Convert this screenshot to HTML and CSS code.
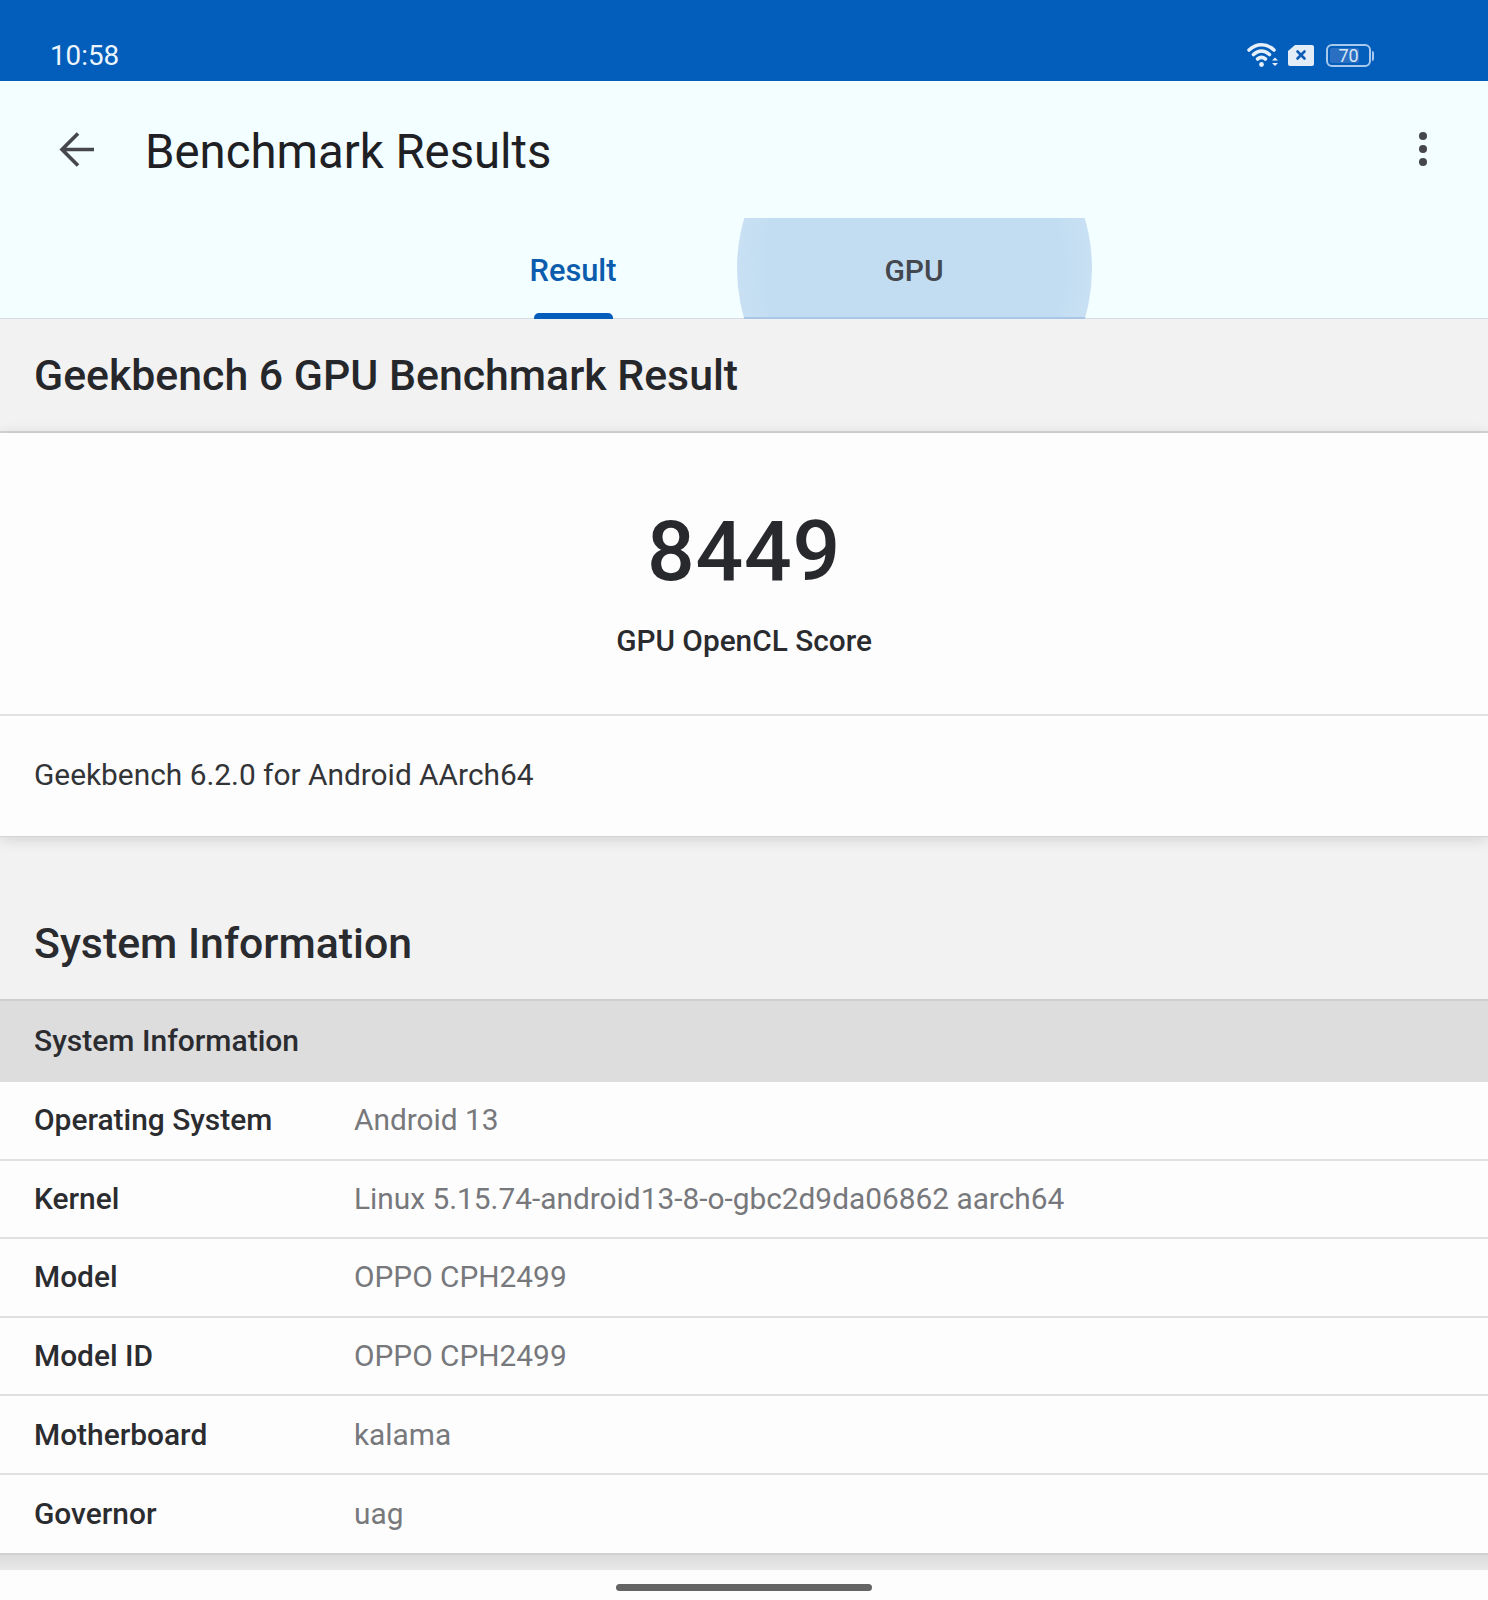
FILE: index.html
```html
<!DOCTYPE html>
<html lang="en">
<head>
<meta charset="utf-8">
<title>Benchmark Results</title>
<link rel="stylesheet" href="styles.css">
</head>
<body>
<div class="screen">
  <header class="status">
    <span class="time">10:58</span>
    <div class="status-icons">
      <svg class="ic-wifi" width="32" height="26" viewBox="0 0 32 26" fill="none" stroke="#e6effa" stroke-width="3.6" stroke-linecap="round">
        <path d="M2 8C9.5 1 19.5 1 27 8"/>
        <path d="M6.5 12.5C11.5 8 17.5 8 22.5 12.5"/>
        <path d="M10.5 17C13 15 16 15 18.5 17"/>
        <circle cx="14.5" cy="22.5" r="2.4" fill="#e6effa" stroke="none"/>
        <path d="M25 18.5h6l-3-3zM25 21h6l-3 3z" fill="#e6effa" stroke="none"/>
      </svg>
      <svg class="ic-sim" width="26" height="21" viewBox="0 0 26 21">
        <path d="M7 0H24a2 2 0 0 1 2 2V19a2 2 0 0 1-2 2H2a2 2 0 0 1-2-2V6z" fill="#e3edf8"/>
        <path d="M9.5 6.5l7 7M16.5 6.5l-7 7" stroke="#0d5cb6" stroke-width="2.6" stroke-linecap="round"/>
      </svg>
      <div class="battery">
        <div class="battery-body"><div class="battery-fill"></div><span class="battery-num">70</span></div>
        <div class="battery-tip"></div>
      </div>
    </div>
  </header>

  <section class="appbar">
    <div class="appbar-row">
      <svg class="ic-back" width="36" height="36" viewBox="0 0 36 36" fill="none" stroke="#45474d" stroke-width="3.6">
        <path d="M35 17.5H3M19 1.5L3 17.5L19 33.5"/>
      </svg>
      <h1 class="appbar-title">Benchmark Results</h1>
      <div class="kebab"><i></i><i></i><i></i></div>
    </div>
    <nav class="tabs">
      <div class="tab tab-active">Result<span class="tab-bar"></span></div>
      <div class="tab tab-ripple"><span class="ripple"></span><span class="tab-label">GPU</span></div>
    </nav>
  </section>

  <main class="content">
    <h2 class="band-title">Geekbench 6 GPU Benchmark Result</h2>
    <section class="card">
      <div class="score">
        <div class="score-num">8449</div>
        <div class="score-label">GPU OpenCL Score</div>
      </div>
      <div class="version">Geekbench 6.2.0 for Android AArch64</div>
    </section>

    <h2 class="section-title">System Information</h2>
    <section class="table">
      <div class="table-head">System Information</div>
      <div class="row"><span class="key">Operating System</span><span class="val">Android 13</span></div>
      <div class="row"><span class="key">Kernel</span><span class="val">Linux 5.15.74-android13-8-o-gbc2d9da06862 aarch64</span></div>
      <div class="row"><span class="key">Model</span><span class="val">OPPO CPH2499</span></div>
      <div class="row"><span class="key">Model ID</span><span class="val">OPPO CPH2499</span></div>
      <div class="row"><span class="key">Motherboard</span><span class="val">kalama</span></div>
      <div class="row"><span class="key">Governor</span><span class="val">uag</span></div>
    </section>
    <div class="under"></div>
  </main>

  <footer class="navbar"><span class="home"></span></footer>
</div>
</body>
</html>
```

FILE: styles.css
```css
* { box-sizing: border-box; }
html, body { margin: 0; padding: 0; background: #fdfdfd; }
body { font-family: Roboto, "Liberation Sans", sans-serif; color: #26272b; }
.screen { width: 1488px; height: 1600px; overflow: hidden; display: flex; flex-direction: column; }

.status { height: 81px; flex: none; background: #025dbb; display: flex; align-items: flex-end; justify-content: space-between; padding: 0 114px 12px 50px; color: #ecf5fc; }
.time { font-size: 27.8px; line-height: 32px; margin-bottom: -3px; }
.status-icons { display: flex; align-items: center; gap: 9px; }
.ic-wifi { display: block; margin-bottom: 1px; }
.ic-sim { display: block; }
.battery { display: flex; align-items: center; gap: 1px; margin-left: 3px; }
.battery-body { position: relative; width: 45px; height: 23px; border: 2px solid #a9c9ec; border-radius: 6px; display: flex; align-items: center; justify-content: center; overflow: hidden; }
.battery-fill { position: absolute; left: 2px; top: 2px; bottom: 2px; width: 70%; background: #2a6fc2; border-radius: 2px; }
.battery-num { position: relative; font-size: 18px; line-height: 20px; color: #d6e6f7; }
.battery-tip { width: 2px; height: 10px; background: #a9c9ec; border-radius: 0 2px 2px 0; }

.appbar { height: 238px; flex: none; background: #f2feff; display: flex; flex-direction: column; }
.appbar-row { height: 137px; flex: none; display: flex; align-items: center; padding: 4px 61px 0 59px; }
.ic-back { display: block; flex: none; margin-bottom: 3px; }
.appbar-title { margin: 0 0 0 50px; font-size: 47.3px; line-height: 56px; font-weight: 400; color: #1e2024; flex: 1; }
.kebab { display: flex; flex-direction: column; gap: 5px; margin-bottom: 5px; }
.kebab i { display: block; width: 8px; height: 8px; border-radius: 50%; background: #45474d; }

.tabs { flex: 1; display: flex; justify-content: center; border-bottom: 1px solid #d5dde3; }
.tab { position: relative; display: flex; align-items: center; justify-content: center; font-size: 30px; font-weight: 500; width: 342px; padding-top: 4px; }
.tab-active { color: #0b5cad; font-size: 30.8px; }
.tab-bar { position: absolute; left: 132px; bottom: -1px; width: 79px; height: 6px; background: #025dbb; border-radius: 5px 5px 0 0; }
.tab-ripple { color: #45474f; padding-right: 2px; }
.ripple { position: absolute; left: -7px; right: -6px; top: 0; bottom: -1px; background: radial-gradient(circle 178px, #c2ddf2 84%, #c9e0f3 100%); clip-path: circle(177.5px at 50% 50%); box-shadow: inset 0 -2px 0 #a9c6e6; }
.tab-label { position: relative; }

.content { flex: 1; display: flex; flex-direction: column; background: #f2f2f3; min-height: 0; }
.band-title { margin: 0; height: 114px; flex: none; padding: 0 34px; display: flex; align-items: center; font-size: 42.8px; font-weight: 500; line-height: 50px; color: #26272b; border-bottom: 2px solid #d6d6d6; }
.card { background: #fdfdfd; flex: none; box-shadow: 0 2px 14px rgba(0,0,0,.14); border-bottom: 1px solid #d3d3d3; }
.score { height: 283px; display: flex; flex-direction: column; align-items: center; border-bottom: 2px solid #e2e2e2; }
.score-num { font-size: 84px; font-weight: 500; line-height: 100px; margin-top: 69px; color: #28292d; letter-spacing: 0.7px; }
.score-label { font-size: 29.8px; font-weight: 500; line-height: 36px; margin-top: 21px; color: #2a2b2f; }
.version { height: 120px; display: flex; align-items: center; padding: 0 34px 4px; font-size: 29.85px; color: #333438; }

.section-title { margin: 0; height: 162px; flex: none; padding: 0 34px 31px; display: flex; align-items: flex-end; font-size: 42.8px; font-weight: 500; line-height: 50px; color: #2a2b2f; }
.table { background: #fdfdfd; flex: none; border-bottom: 2px solid #d0d0d0; }
.table-head { height: 83px; display: flex; align-items: center; padding: 0 34px 3px; background: #dddddd; border-top: 2px solid #cfcfcf; font-size: 30px; font-weight: 500; color: #2b2c30; }
.row { height: 78.6px; display: flex; align-items: center; padding: 0 34px 1px; border-bottom: 2px solid #e0e0e0; font-size: 29.83px; }
.row:last-child { height: 78px; border-bottom: 0; }
.key { width: 320px; flex: none; font-weight: 500; color: #2b2c30; font-size: 29.9px; }
.val { color: #77787c; }
.under { height: 17px; flex: none; background: linear-gradient(#dcdcdc, #e9e9e9); }

.navbar { height: 30px; flex: none; background: #fdfdfd; display: flex; justify-content: center; align-items: flex-start; padding-top: 14px; }
.home { width: 256px; height: 7px; background: #646464; border-radius: 4px; }
```
